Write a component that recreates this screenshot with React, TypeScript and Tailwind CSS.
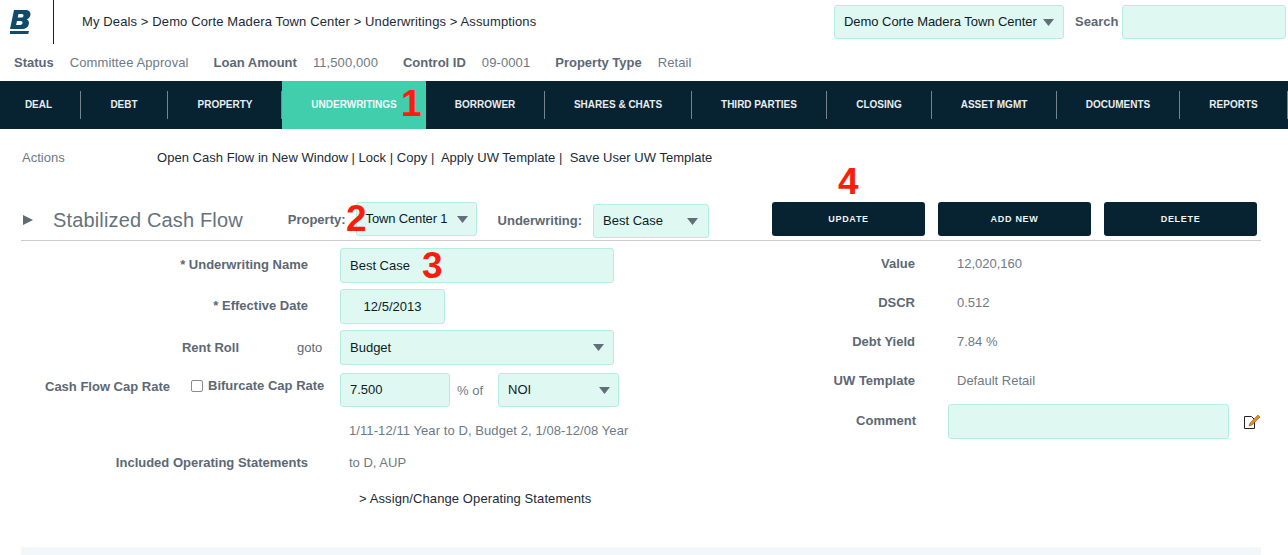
import React from "react";

const NAV_ITEMS = [
  { label: "DEAL", width: "w-[81px] pr-[3px]" },
  { label: "DEBT", width: "w-[87px]" },
  { label: "PROPERTY", width: "w-[114px] pl-[1px]" },
  { label: "UNDERWRITINGS", width: "w-[144px]", active: true },
  { label: "BORROWER", width: "w-[119px]" },
  { label: "SHARES & CHATS", width: "w-[147px]" },
  { label: "THIRD PARTIES", width: "w-[135px]" },
  { label: "CLOSING", width: "w-[105px]" },
  { label: "ASSET MGMT", width: "w-[125px]" },
  { label: "DOCUMENTS", width: "w-[123px]" },
  { label: "REPORTS", width: "w-[108px]" },
];

const Caret = ({ className = "" }: { className?: string }) => (
  <svg width="11" height="7" viewBox="0 0 11 7" className={className}>
    <path d="M0 0h11L5.500 7z" fill="#646e78" />
  </svg>
);

const Select = ({ label, className }: { label: string; className: string }) => (
  <div className={`flex items-center justify-between whitespace-nowrap rounded-[3px] border border-[#b4eede] bg-[#e0f8f2] text-[#0c1c28] ${className}`}>
    <span>{label}</span>
    <Caret />
  </div>
);

const Num = ({ children, className }: { children: React.ReactNode; className: string }) => (
  <span className={`absolute text-[37px] leading-none font-bold text-[#fc1c0c] ${className}`}>{children}</span>
);

const Meta = ({ label, value }: { label: string; value: string }) => (
  <div className="flex items-center gap-[16px]">
    <b className="text-[#5c6874]">{label}</b>
    <span className="tracking-[0.1px] text-[#6e7a84]">{value}</span>
  </div>
);

const RightRow = ({ label, children, className }: { label: string; children: React.ReactNode; className: string }) => (
  <div className={`flex items-center ${className}`}>
    <b className="w-[139px] text-right text-[#5c6874]">{label}</b>
    <div className="ml-[42px] text-[#6e7a84]">{children}</div>
  </div>
);

export default function App() {
  return (
    <div className="relative h-[555px] overflow-hidden bg-white font-['Liberation_Sans',Arial,sans-serif] text-[13px]">
      {/* top bar */}
      <header className="flex h-[45px] items-start">
        <div className="flex h-[44px] w-[54px] items-center border-r border-[#0c2433] pl-[10px]">
          <svg width="21" height="25" viewBox="0 0 21 25">
            <path d="M4 0h11c4 0 6 2 5.400 5-.4 2.300-1.700 3.700-3.600 4.400 1.800.8 2.500 2.300 2.100 4.300C18.200 17.400 15.500 19 12 19H0zM8.500 4l-.8 3.600h3.600c1.200 0 2-.6 2.200-1.800.2-1.100-.4-1.800-1.600-1.800zM7 11l-.9 4h4c1.300 0 2.100-.7 2.400-2 .2-1.200-.4-2-1.700-2z" fill="#0f4c6b" fillRule="evenodd" />
            <path d="M0 21h19l-.8 3H0z" fill="#0f4c6b" />
          </svg>
        </div>
        <div className="ml-[28px] mt-[12px] w-[752px] tracking-[0.12px] text-[#1c2a36]">My Deals &gt; Demo Corte Madera Town Center &gt; Underwritings &gt; Assumptions</div>
        <Select label="Demo Corte Madera Town Center" className="mt-[5px] h-[34px] w-[230px] pl-[9px] pr-[9px] tracking-[-0.05px]" />
        <b className="ml-[11px] mt-[12px] text-[#5c6874]">Search</b>
        <div className="ml-[4px] mt-[5px] h-[34px] w-[164px] rounded-[3px] border border-[#b4eede] bg-[#e0f8f2]" />
      </header>

      {/* deal meta */}
      <div className="flex h-[36px] items-center gap-[25px] pl-[14px]">
        <Meta label="Status" value="Committee Approval" />
        <Meta label="Loan Amount" value="11,500,000" />
        <Meta label="Control ID" value="09-0001" />
        <Meta label="Property Type" value="Retail" />
      </div>

      {/* nav */}
      <nav className="flex h-[48px] items-center bg-[#072231]">
        {NAV_ITEMS.map((item) => (
          <div
            key={item.label}
            className={`flex items-center justify-center pb-[2px] text-[10px] font-bold ${item.width} ${
              item.active ? "h-[48px] bg-[#41ceac] text-[#f2fbf9]" : "h-[28px] border-r border-[#77848c] text-[#e8edf0]"
            }`}
          >
            {item.label}
          </div>
        ))}
      </nav>

      {/* actions */}
      <div className="flex h-[57px] items-center pl-[22px] pt-[1px]">
        <span className="w-[135px] text-[#6e7a84]">Actions</span>
        <span className="tracking-[0.03px] text-[#1c2a36]">Open Cash Flow in New Window | Lock | Copy |&nbsp; Apply UW Template |&nbsp; Save User UW Template</span>
      </div>

      {/* section heading */}
      <div className="ml-[21px] flex h-[55px] w-[1240px] items-start border-b border-[#cccccc]">
        <svg width="10" height="10" viewBox="0 0 10 10" className="ml-[2px] mt-[29px]">
          <path d="M0 0l10 5-10 5z" fill="#5f6b75" />
        </svg>
        <span className="ml-[20px] mt-[22px] whitespace-nowrap text-[20px] leading-[24px] tracking-[0.15px] text-[#66727c]">Stabilized Cash Flow</span>
        <b className="ml-[45px] mt-[24px] text-[#5c6874]">Property:</b>
        <Select label="Town Center 1" className="ml-[10px] mt-[16px] h-[34px] w-[121px] pl-[9px] pr-[8px] tracking-[-0.15px]" />
        <b className="ml-[21px] mt-[25px] text-[#5c6874]">Underwriting:</b>
        <Select label="Best Case" className="ml-[11px] mt-[18px] h-[34px] w-[116px] pl-[9px] pr-[10px]" />
        <div className="ml-[63px] mt-[16px] flex gap-[13px]">
          {["UPDATE", "ADD NEW", "DELETE"].map((b) => (
            <button key={b} className="h-[34px] w-[153px] rounded-[3px] bg-[#072231] pt-[2px] text-[9px] font-bold tracking-[0.7px] text-[#f2f5f6]">
              {b}
            </button>
          ))}
        </div>
      </div>

      {/* form */}
      <div className="flex">
        <div className="w-[776px]">
          <div className="mt-[7px] flex">
            <b className="w-[308px] pt-[7px] text-right text-[#5c6874]">* Underwriting Name</b>
            <div className="ml-[32px] flex h-[35px] w-[274px] items-center rounded-[3px] border border-[#b4eede] bg-[#e0f8f2] pl-[9px] text-[#0c1c28]">Best Case</div>
          </div>
          <div className="mt-[6px] flex">
            <b className="w-[308px] pt-[7px] text-right text-[#5c6874]">* Effective Date</b>
            <div className="ml-[32px] flex h-[35px] w-[105px] items-center justify-center rounded-[3px] border border-[#b4eede] bg-[#e0f8f2] text-[#0c1c28]">12/5/2013</div>
          </div>
          <div className="mt-[6px] flex">
            <b className="w-[239px] pt-[8px] text-right text-[#5c6874]">Rent Roll</b>
            <span className="ml-[58px] w-[43px] pt-[8px] text-[#5c6874]">goto</span>
            <Select label="Budget" className="h-[35px] w-[274px] pl-[9px] pr-[9px]" />
          </div>
          <div className="mt-[8px] flex">
            <b className="ml-[45px] w-[146px] pt-[4px] text-[#5c6874]">Cash Flow Cap Rate</b>
            <label className="flex h-[26px] w-[149px] items-center">
              <span className="h-[12px] w-[12px] rounded-[2px] border border-[#8a8a8a] bg-white" />
              <b className="ml-[5px] text-[#5c6874]">Bifurcate Cap Rate</b>
            </label>
            <div className="flex h-[34px] w-[110px] items-center rounded-[3px] border border-[#b4eede] bg-[#e0f8f2] pl-[9px] text-[#0c1c28]">7.500</div>
            <span className="ml-[7px] w-[41px] pt-[8px] text-[#6e7a84]">% of</span>
            <Select label="NOI" className="h-[34px] w-[121px] pl-[9px] pr-[8px]" />
          </div>
          <div className="ml-[349px] mt-[14px] tracking-[0.08px] text-[#6e7a84]">1/11-12/11 Year to D, Budget 2, 1/08-12/08 Year</div>
          <div className="mt-[12px] flex">
            <b className="w-[308px] text-right text-[#5c6874]">Included Operating Statements</b>
            <span className="ml-[41px] text-[#6e7a84]">to D, AUP</span>
          </div>
          <div className="ml-[359px] mt-[17px] tracking-[0.1px] text-[#1c2a36]">&gt; Assign/Change Operating Statements</div>
        </div>

        {/* summary column */}
        <div className="w-[512px]">
          <RightRow label="Value" className="mt-[15px] h-[16px]">12,020,160</RightRow>
          <RightRow label="DSCR" className="mt-[23px] h-[16px]">0.512</RightRow>
          <RightRow label="Debt Yield" className="mt-[23px] h-[16px]">7.84 %</RightRow>
          <RightRow label="UW Template" className="mt-[23px] h-[16px]">Default Retail</RightRow>
          <div className="mt-[15px] flex items-center">
            <b className="w-[140px] pb-[2px] text-right text-[#5c6874]">Comment</b>
            <div className="ml-[32px] h-[35px] w-[281px] rounded-[3px] border border-[#b4eede] bg-[#e0f8f2]" />
            <svg width="18" height="16" viewBox="0 0 18 16" className="ml-[15px]">
              <path d="M.5 2.500h7l3 3v9H.5z" fill="#fff" stroke="#222" />
              <path d="M5 12l1-3 8-8 2 2-8 8z" fill="#e58a1f" stroke="#7a4a10" strokeWidth="0.500" />
            </svg>
          </div>
        </div>
      </div>

      {/* next section, cut by the window */}
      <div className="absolute bottom-0 left-[21px] h-[8px] w-[1240px] bg-[#f2f8fa]" />

      {/* red annotations */}
      <Num className="left-[401px] top-[85px]">1</Num>
      <Num className="left-[346px] top-[200px]">2</Num>
      <Num className="left-[422px] top-[247px]">3</Num>
      <Num className="left-[838px] top-[163px]">4</Num>
    </div>
  );
}
